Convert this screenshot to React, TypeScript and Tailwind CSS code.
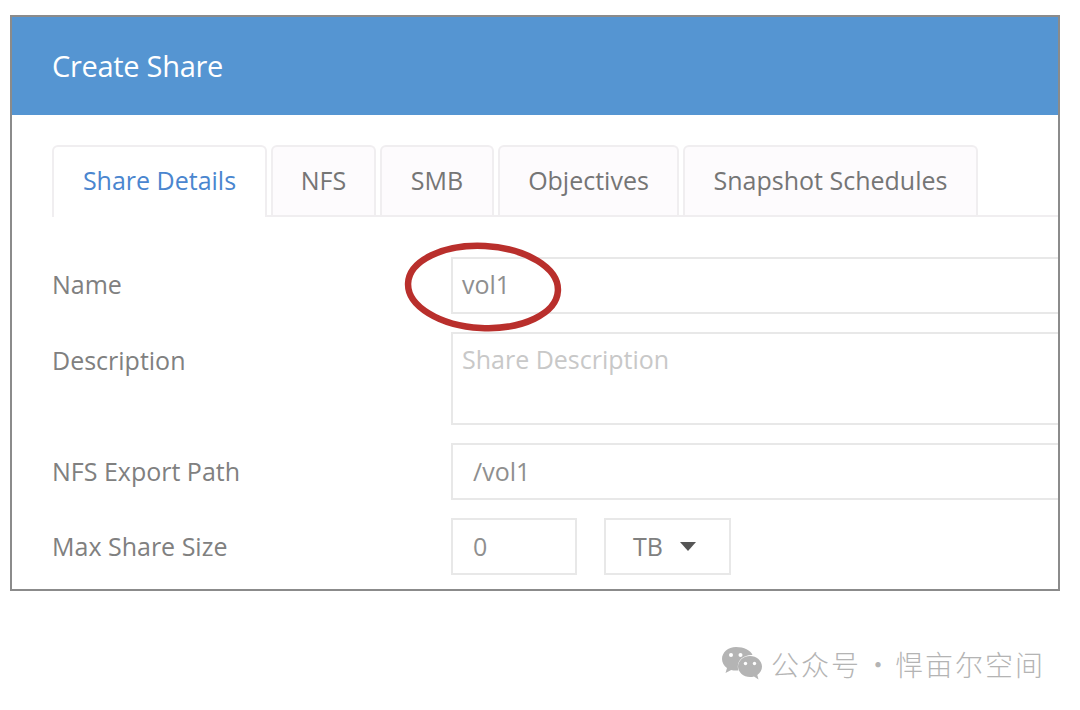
const tabs = [
  { label: "NFS", width: "w-[105px]" },
  { label: "SMB", width: "w-[114px]" },
  { label: "Objectives", width: "w-[181px]" },
  { label: "Snapshot Schedules", width: "w-[295px]" },
];

const fieldClass = "border-2 border-[#e8e8e8] text-[#8f8f8f] flex items-center";

const WeChatIcon = () => (
  <svg width="42" height="36" viewBox="0 0 42 36" className="shrink-0">
    <path d="M15 1C7 1 1 6.500 1 13c0 3.600 1.900 6.800 5 9l-1.500 5 5.700-3c1.500.4 3 .6 4.800.6 1 0 1.600 0 2.400-.2-.4-1.200-.6-2.400-.6-3.600 0-6.800 6-11.800 13.500-11.800h1.200C29.800 4.500 23 1 15 1z" fill="#b4b4b4" />
    <path d="M41 20.500C41 14.800 35.500 10 29 10s-12 4.800-12 10.500S22.500 31 29 31c1.400 0 2.700-.2 4-.6l4.500 3-1.200-4.500c2.900-1.900 4.700-5 4.700-8.400z" fill="#b4b4b4" />
    <circle cx="10" cy="9" r="2" fill="#fff" />
    <circle cx="19.500" cy="9" r="2" fill="#fff" />
    <circle cx="24.500" cy="17.500" r="1.700" fill="#fff" />
    <circle cx="33.500" cy="17.500" r="1.700" fill="#fff" />
  </svg>
);

const App = () => {
  return (
    <div className="w-[1080px] h-[710px] bg-white relative overflow-hidden font-['Open_Sans',sans-serif] pt-[15px] pl-[10px]">
      <div className="w-[1050px] h-[576px] border-2 border-[#8b8b8b] overflow-hidden relative">
        {/* Header */}
        <div className="h-[98px] bg-[#5595d2] flex items-center pl-[40px]">
          <h1 className="text-white text-[29px] tracking-[-0.3px]">Create Share</h1>
        </div>

        {/* Tabs */}
        <div className="flex items-end gap-[4px] ml-[40px] pt-[32px] h-[102px] border-b-2 border-[#f0eef0] text-[25px]">
          <div className="w-[215px] h-[72px] -mb-[2px] bg-white border-2 border-b-0 border-[#f0eef0] rounded-t-md flex items-center justify-center pb-[2px] text-[#4a86cf]">
            Share Details
          </div>
          {tabs.map((tab) => (
            <div
              key={tab.label}
              className={`${tab.width} h-[70px] bg-[#fdfbfd] border-2 border-b-0 border-[#f0eef0] rounded-t-md flex items-center justify-center text-[#757575]`}
            >
              {tab.label}
            </div>
          ))}
        </div>

        {/* Form */}
        <div className="grid grid-cols-[399px_1fr] gap-y-[18px] pl-[40px] pt-[40px] text-[25px] text-[#808080]">
          <label className="h-[57px] flex items-center pb-[2px]">Name</label>
          <div className={`${fieldClass} w-[700px] h-[57px] pl-[9px] pb-[2px]`}>vol1</div>

          <label className="h-[57px] flex items-center">Description</label>
          <div className="border-2 border-[#e8e8e8] w-[700px] h-[93px] pl-[9px] pt-[7px] text-[#c8c8c8]">
            Share Description
          </div>

          <label className="h-[57px] flex items-center">NFS Export Path</label>
          <div className={`${fieldClass} w-[700px] h-[57px] pl-[20px]`}>/vol1</div>

          <label className="h-[57px] flex items-center">Max Share Size</label>
          <div className="flex gap-[27px]">
            <div className={`${fieldClass} w-[126px] h-[57px] pl-[20px]`}>0</div>
            <div className={`${fieldClass} w-[127px] h-[57px] pl-[27px] gap-[17px] text-[#808080]`}>
              TB
              <span className="w-0 h-0 border-x-[8px] border-x-transparent border-t-[9px] border-t-[#555555]" />
            </div>
          </div>
        </div>
      </div>

      {/* Hand drawn highlight around the name value */}
      <svg width="170" height="100" viewBox="0 0 170 100" className="absolute left-[400px] top-[237px]">
        <ellipse cx="83" cy="50" rx="75" ry="41" fill="none" stroke="#b92f2c" strokeWidth="6.500" transform="rotate(3 83 50)" />
      </svg>

      {/* Watermark */}
      <div className="absolute left-[721px] top-[643px] flex items-center gap-[8px] text-[28px] font-light text-[#b4b4b4] font-['Noto_Sans_CJK_SC',sans-serif]">
        <WeChatIcon />
        <span className="tracking-[2px]">公众号</span>
        <span className="w-[28px] -mx-[5px] text-center">·</span>
        <span className="tracking-[2px]">悍亩尔空间</span>
      </div>
    </div>
  );
};

export default App;
